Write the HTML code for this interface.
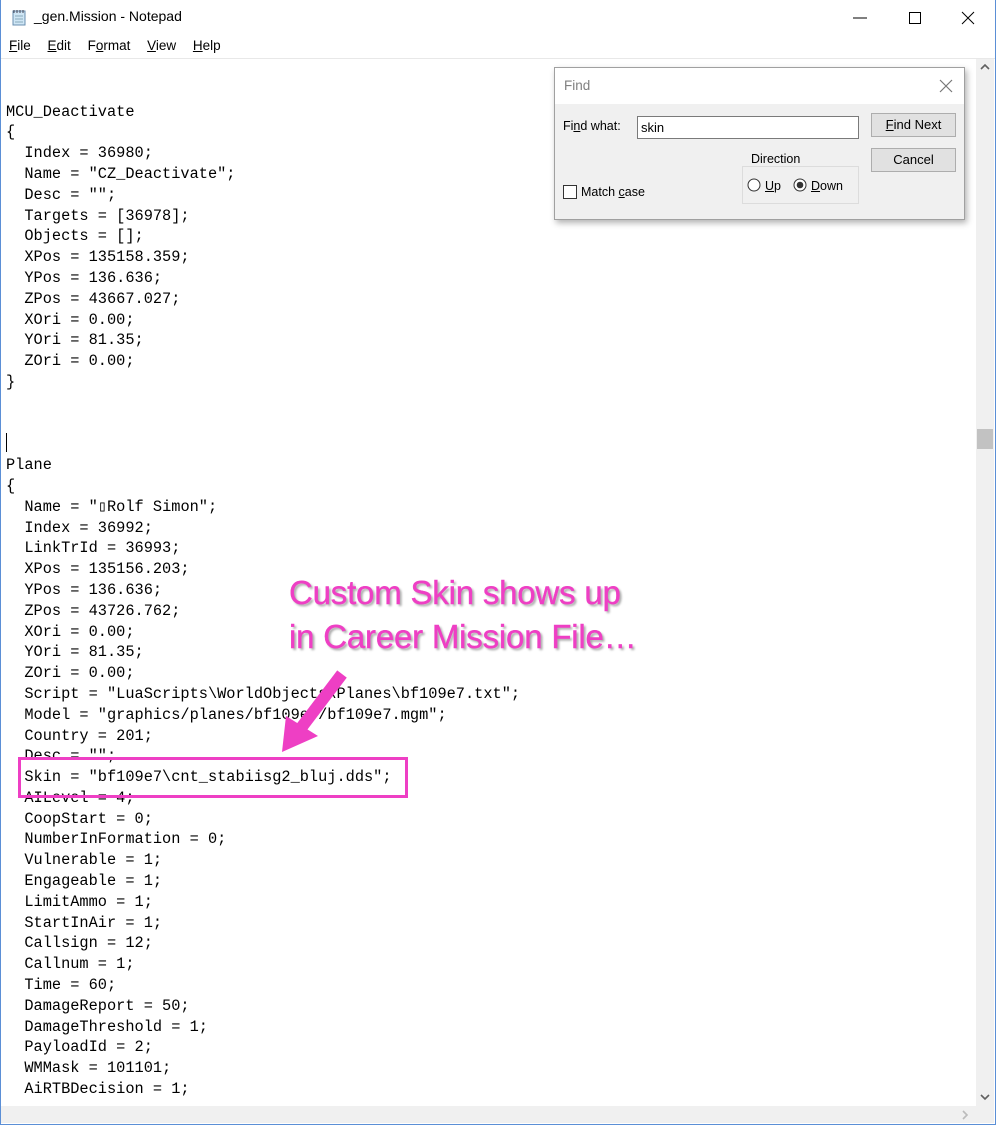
<!DOCTYPE html>
<html><head><meta charset="utf-8"><style>
*{margin:0;padding:0;box-sizing:border-box}
body{width:996px;height:1125px;background:#fff;position:relative;overflow:hidden;font-family:"Liberation Sans",sans-serif}
.win{position:absolute;left:0;top:0;width:996px;height:1125px;border:1px solid #5b8fd6;border-top:none}
.title{position:absolute;left:34px;top:8px;font-size:14px;color:#000}
.menu{position:absolute;top:38px;left:9px;font-size:13.5px;color:#000}
.menu span{margin-right:13px}
.code{position:absolute;left:6px;top:60px;font-family:"Liberation Mono",monospace;font-size:15.3px;line-height:20.8px;color:#000;white-space:pre}
.vs{position:absolute;left:976px;top:59px;width:18px;height:1047px;background:#f0f0f0}
.hs{position:absolute;left:1px;top:1106px;width:975px;height:17px;background:#f0f0f0}
.ann{position:absolute;left:289px;color:#ee3fc4;font-family:"Liberation Sans",sans-serif;font-size:33px;text-shadow:2px 2px 2px rgba(0,0,0,.35);letter-spacing:-0.2px;-webkit-text-stroke:0.4px #ee3fc4}
.box{position:absolute;left:18px;top:757px;width:390px;height:41px;border:3px solid #ee3fc4}
.dlg{position:absolute;left:554px;top:67px;width:411px;height:153px;background:#f0f0f0;border:1px solid #a0a0a0;box-shadow:2px 3px 6px rgba(0,0,0,.3);font-size:12.5px}
.dt{position:absolute;left:0;top:0;width:409px;height:36px;background:#fff}
.btn{position:absolute;left:316px;width:85px;height:24px;background:#e1e1e1;border:1px solid #adadad;text-align:center;line-height:22px;font-size:13px}
</style></head><body>
<div class="win"></div>
<svg style="position:absolute;left:11px;top:9px" width="17" height="17"><rect x="2" y="2" width="12" height="14" fill="#cfe6f5" stroke="#6a8fb0"/><path d="M3 1v3M6 1v3M9 1v3M12 1v3" stroke="#445"/><path d="M4 7h8M4 10h8M4 13h8" stroke="#8ab"/></svg>
<div class="title">_gen.Mission - Notepad</div>
<svg style="position:absolute;left:850px;top:8px" width="140" height="20"><path d="M3 10h14" stroke="#000"/><rect x="59.5" y="4.5" width="11" height="11" fill="none" stroke="#000"/><path d="M112 4l12 12M124 4l-12 12" stroke="#000"/></svg>
<div class="menu"><span><u>F</u>ile</span> <span><u>E</u>dit</span> <span>F<u>o</u>rmat</span> <span><u>V</u>iew</span> <span><u>H</u>elp</span></div>
<div style="position:absolute;left:1px;top:58px;width:994px;height:1px;background:#e8e8e8"></div>
<div class="code">

MCU_Deactivate
{
  Index = 36980;
  Name = "CZ_Deactivate";
  Desc = "";
  Targets = [36978];
  Objects = [];
  XPos = 135158.359;
  YPos = 136.636;
  ZPos = 43667.027;
  XOri = 0.00;
  YOri = 81.35;
  ZOri = 0.00;
}



Plane
{
  Name = "▯Rolf Simon";
  Index = 36992;
  LinkTrId = 36993;
  XPos = 135156.203;
  YPos = 136.636;
  ZPos = 43726.762;
  XOri = 0.00;
  YOri = 81.35;
  ZOri = 0.00;
  Script = "LuaScripts\WorldObjects\Planes\bf109e7.txt";
  Model = "graphics/planes/bf109e7/bf109e7.mgm";
  Country = 201;
  Desc = "";
  Skin = "bf109e7\cnt_stabiisg2_bluj.dds";
  AILevel = 4;
  CoopStart = 0;
  NumberInFormation = 0;
  Vulnerable = 1;
  Engageable = 1;
  LimitAmmo = 1;
  StartInAir = 1;
  Callsign = 12;
  Callnum = 1;
  Time = 60;
  DamageReport = 50;
  DamageThreshold = 1;
  PayloadId = 2;
  WMMask = 101101;
  AiRTBDecision = 1;</div>
<div style="position:absolute;left:6px;top:433px;width:1px;height:19px;background:#000"></div>
<div class="vs"><div style="position:absolute;left:1px;top:370px;width:16px;height:20px;background:#c2c2c2"></div>
<svg style="position:absolute;left:4px;top:4px" width="10" height="8"><path d="M1 6l4-4 4 4" stroke="#606060" stroke-width="1.6" fill="none"/></svg>
<svg style="position:absolute;left:4px;top:1034px" width="10" height="8"><path d="M1 2l4 4 4-4" stroke="#606060" stroke-width="1.6" fill="none"/></svg></div>
<div class="hs"><svg style="position:absolute;left:960px;top:4px" width="8" height="10"><path d="M2 1l4 4-4 4" stroke="#bbb" stroke-width="1.6" fill="none"/></svg></div>
<div style="position:absolute;left:976px;top:1106px;width:18px;height:17px;background:#f0f0f0"></div>
<div class="ann" style="top:574px">Custom Skin shows up</div>
<div class="ann" style="top:618px">in Career Mission File…</div>
<div class="box"></div>
<svg style="position:absolute;left:270px;top:660px" width="90" height="100"><path d="M72 14L28 72" stroke="#ee3fc4" stroke-width="12"/><path d="M12 92l4-36 32 20z" fill="#ee3fc4"/></svg>
<div class="dlg">
<div class="dt"><span style="position:absolute;left:9px;top:10px;color:#808080;font-size:13.5px">Find</span>
<svg style="position:absolute;left:384px;top:11px" width="14" height="14"><path d="M1 1l12 12M13 1L1 13" stroke="#777" stroke-width="1.2"/></svg></div>
<span style="position:absolute;left:8px;top:51px">Fi<u>n</u>d what:</span>
<div style="position:absolute;left:82px;top:48px;width:222px;height:23px;background:#fff;border:1px solid #7a7a7a;padding:3px 3px;font-size:13px">skin</div>
<div class="btn" style="top:45px"><u>F</u>ind Next</div>
<div class="btn" style="top:80px">Cancel</div>
<div style="position:absolute;left:187px;top:98px;width:117px;height:38px;border:1px solid #dcdcdc"></div>
<span style="position:absolute;left:194px;top:84px;background:#f0f0f0;padding:0 2px">Direction</span>
<svg style="position:absolute;left:192px;top:110px" width="14" height="14"><circle cx="7" cy="7" r="6" fill="#fff" stroke="#333"/></svg>
<span style="position:absolute;left:210px;top:111px"><u>U</u>p</span>
<svg style="position:absolute;left:238px;top:110px" width="14" height="14"><circle cx="7" cy="7" r="6" fill="#fff" stroke="#333"/><circle cx="7" cy="7" r="3.3" fill="#333"/></svg>
<span style="position:absolute;left:256px;top:111px"><u>D</u>own</span>
<div style="position:absolute;left:8px;top:117px;width:14px;height:14px;background:#fff;border:1px solid #333"></div>
<span style="position:absolute;left:26px;top:117px">Match <u>c</u>ase</span>
</div>
</body></html>
